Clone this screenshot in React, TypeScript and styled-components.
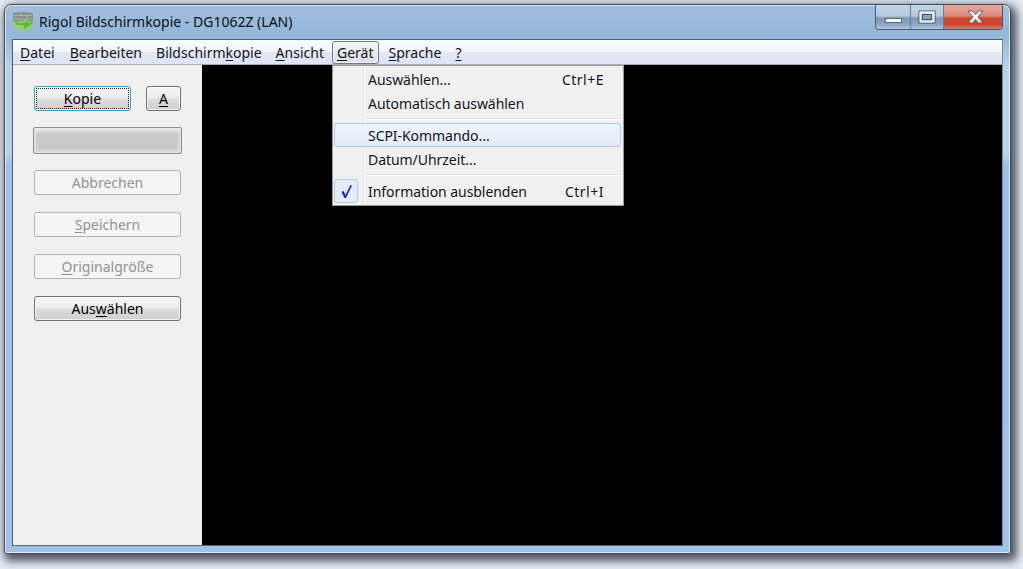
import styled, { createGlobalStyle } from "styled-components";

const Global = createGlobalStyle`
  html, body { margin: 0; padding: 0; height: 100%; background: #e4ebf3; overflow: hidden; }
  body { font-family: "Noto Sans", "Open Sans", sans-serif; font-size: 14px; color: #000; }
  #root { height: 100%; }
`;

const Desktop = styled.div`
  width: 1023px;
  height: 569px;
  box-sizing: border-box;
  padding: 4px 12px 15px 4px;
`;

const Window = styled.div`
  height: 100%;
  box-sizing: border-box;
  display: flex;
  flex-direction: column;
  padding: 0 7px 7px 7px;
  border: 1px solid #3d4a58;
  border-radius: 7px 7px 3px 3px;
  background: linear-gradient(180deg, #a3bfdc 0, #94b6da 30px, #b8d0e8 60px, #b9d1e9 150px, #9dc0e8 160px, #9fc2ea 100%);
  box-shadow: inset 0 0 0 1px rgba(255,255,255,0.7), 3px 4px 9px 3px rgba(30,35,50,0.75);
  position: relative;
`;

const TitleBar = styled.div`
  height: 34px;
  flex: none;
  display: flex;
  align-items: center;
  gap: 6px;
  padding: 0 0 2px 1px;
  box-sizing: border-box;
  font-size: 14px;
  color: #0a0f14;
  white-space: nowrap;
`;

const Caption = styled.div`
  position: absolute;
  top: 0;
  right: 7px;
  display: flex;
  height: 24px;
  border: 1px solid #4a5a6c;
  border-top: none;
  border-radius: 0 0 4px 4px;
  overflow: hidden;
`;

const CaptionButton = styled.div<{ $close?: boolean; $w: number }>`
  width: ${(p) => p.$w}px;
  box-sizing: content-box;
  display: flex;
  align-items: center;
  justify-content: center;
  border-left: 1px solid #6c7f94;
  background: ${(p) =>
    p.$close
      ? "linear-gradient(180deg, #e6a79d 0, #dc8a7e 45%, #c64a2f 55%, #c9452a 80%, #d8806c 100%)"
      : "linear-gradient(180deg, #c4d5e6 0, #b3c8dc 45%, #7f99b4 55%, #8aa5c0 80%, #b0c8e0 100%)"};
  &:first-child { border-left: none; }
  svg { margin-left: ${(p) => (p.$close ? 4 : 0)}px; }
`;

const Client = styled.div`
  flex: 1;
  min-height: 0;
  display: flex;
  flex-direction: column;
  background: #f0f0f0;
  border: 1px solid #4c5866;
  border-bottom-color: #5a6672;
  border-right-color: #7d8a98;
`;

const MenuBar = styled.div`
  height: 25px;
  flex: none;
  box-sizing: border-box;
  display: flex;
  align-items: flex-start;
  padding-top: 1px;
  border-bottom: 1px solid #a8aebc;
  background: linear-gradient(180deg, #fbfcfe 0, #f2f5fa 48%, #e3e7f4 52%, #dfe4f2 100%);
`;

const MenuItem = styled.div<{ $open?: boolean }>`
  height: 23px;
  box-sizing: border-box;
  padding: 0 7px;
  line-height: 23px;
  white-space: nowrap;
  color: #10141c;
  &:first-child { padding-right: 8px; }
  ${(p) =>
    p.$open &&
    `border: 1px solid #6f7a86;
     border-radius: 3px;
     line-height: 21px;
     margin: 0 2px 0 1px;
     padding: 0 5px 0 4px;
     background: linear-gradient(180deg, #f4f5f8, #dcdfe8);
     box-shadow: inset 0 0 0 1px rgba(255,255,255,0.6);`}
`;

const Body = styled.div`
  flex: 1;
  min-height: 0;
  display: flex;
`;

const SidePanel = styled.div`
  width: 189px;
  flex: none;
  box-sizing: border-box;
  padding: 21px 21px 0 21px;
  display: flex;
  flex-direction: column;
`;

const TopRow = styled.div`
  display: flex;
  justify-content: space-between;
  margin-bottom: 16px;
`;

const Button = styled.div<{ $w?: number; $disabled?: boolean; $focus?: boolean }>`
  width: ${(p) => (p.$w ? `${p.$w}px` : "100%")};
  height: 25px;
  box-sizing: border-box;
  flex: none;
  display: flex;
  align-items: center;
  justify-content: center;
  border-radius: 3px;
  border: 1px solid ${(p) => (p.$disabled ? "#adb2b5" : p.$focus ? "#3c9dc8" : "#707070")};
  color: ${(p) => (p.$disabled ? "#8f9496" : "#000")};
  background: ${(p) =>
    p.$disabled ? "#f4f4f4" : "linear-gradient(180deg, #f4f4f4 0, #ececec 48%, #dcdcdc 52%, #cfcfcf 100%)"};
  box-shadow: inset 0 0 0 1px ${(p) => (p.$disabled ? "#f8f8f8" : "rgba(255,255,255,0.75)")};
  ${(p) => p.$focus && "outline: 1px dotted #222; outline-offset: -3px;"}
`;

const Progress = styled.div`
  height: 27px;
  box-sizing: border-box;
  margin: 0 -1px 16px -1px;
  border: 1px solid #8e8e8e;
  border-radius: 2px;
  background: linear-gradient(180deg, #f0f0f0 0, #c9c9c9 6px, #c8c8c8 20px, #e4e4e4 100%);
  box-shadow: inset 3px 0 3px -1px #e2e2e2, inset -3px 0 3px -1px #e2e2e2;
`;

const Stack = styled.div`
  display: flex;
  flex-direction: column;
  gap: 17px;
`;

const Screen = styled.div`
  flex: 1;
  background: #000;
`;

const Key = styled.span`
  text-decoration: underline;
  text-underline-offset: 2px;
  text-decoration-thickness: 1px;
`;

const Dropdown = styled.div`
  position: absolute;
  left: 327px;
  top: 60px;
  width: 292px;
  height: 141px;
  box-sizing: border-box;
  padding: 1px 2px 1px 1px;
  display: flex;
  flex-direction: column;
  background: #f0f0f0;
  border: 1px solid #979797;
  z-index: 2;
  &::before {
    content: "";
    position: absolute;
    left: 30px;
    top: 1px;
    bottom: 1px;
    width: 2px;
    background: linear-gradient(90deg, #e2e3e3 50%, #fff 50%);
  }
`;

const Entry = styled.div<{ $active?: boolean }>`
  position: relative;
  height: 24px;
  flex: none;
  box-sizing: border-box;
  display: flex;
  align-items: center;
  justify-content: space-between;
  padding: 1px 17px 0 34px;
  white-space: nowrap;
  color: #10141c;
  letter-spacing: -0.05px;
  border-radius: 3px;
  ${(p) =>
    p.$active &&
    `border: 1px solid #aeccee;
     padding: 0 16px 0 33px;
     background: linear-gradient(180deg, #f0f4fa, #e3ebf6);`}
`;

const Shortcut = styled.span`
  letter-spacing: 0.5px;
`;

const Separator = styled.div`
  height: 2px;
  flex: none;
  margin: 3px 0 3px 30px;
  background: linear-gradient(180deg, #e0e0e0 50%, #fff 50%);
`;

const CheckBox = styled.div`
  position: absolute;
  left: 0;
  top: 0;
  width: 24px;
  height: 24px;
  box-sizing: border-box;
  display: flex;
  align-items: center;
  justify-content: center;
  border: 1px solid #aeccee;
  border-radius: 3px;
  background: #e4ecf8;
`;

const Underlined = ({ before = "", k, after = "" }: { before?: string; k: string; after?: string }) => (
  <span>
    {before}
    <Key>{k}</Key>
    {after}
  </span>
);

const AppIcon = () => (
  <svg width="20" height="20" viewBox="0 0 20 20" style={{ flex: "none" }}>
    <path d="M0 2 Q10 0 20 2 L20 11 L0 11 Z" fill="#8d8f8c" />
    <path d="M1 4.5 H19 M1 8 H19 M8 2 V4.5 M14 4.5 V8" stroke="#b0b2ae" strokeWidth="1" fill="none" />
    <path d="M0 10 Q1 19 7 19.5 H14 Q20 18 20 10 Z" fill="#8fcf6e" />
    <path d="M2 10 H11 V6 L20 12 L11 18 V14 H6 Q2 14 2 10 Z" fill="#5fb83e" />
    <path d="M4 11 H12 V8 L17 12" stroke="#a6e07f" strokeWidth="1" fill="none" />
  </svg>
);

const App = () => (
  <Desktop>
    <Global />
    <Window>
      <TitleBar>
        <AppIcon />
        Rigol Bildschirmkopie - DG1062Z (LAN)
      </TitleBar>
      <Caption>
        <CaptionButton $w={34}>
          <svg width="17" height="14" viewBox="0 0 17 14">
            <rect x="0.5" y="8.5" width="16" height="4" fill="#fff" stroke="#5a6a7c" />
          </svg>
        </CaptionButton>
        <CaptionButton $w={32}>
          <svg width="18" height="14" viewBox="0 0 18 14">
            <rect x="1" y="1" width="16" height="12" fill="none" stroke="#48586a" strokeWidth="1" />
            <rect x="2.5" y="2.5" width="13" height="9" fill="none" stroke="#f4f4f4" strokeWidth="2" />
            <rect x="4.5" y="4.5" width="9" height="5" fill="#8aa2ba" stroke="#48586a" />
          </svg>
        </CaptionButton>
        <CaptionButton $w={58} $close>
          <svg width="17" height="14" viewBox="0 0 17 14">
            <path
              d="M1 1 H5.5 L8.5 4.5 L11.5 1 H16 L11 7 L16 13 H11.5 L8.5 9.5 L5.5 13 H1 L6 7 Z"
              fill="#f2f2f2"
              stroke="#5e5e6a"
              strokeWidth="1"
            />
          </svg>
        </CaptionButton>
      </Caption>
      <Client>
        <MenuBar>
          <MenuItem><Underlined k="D" after="atei" /></MenuItem>
          <MenuItem><Underlined k="B" after="earbeiten" /></MenuItem>
          <MenuItem><Underlined before="Bildschirm" k="k" after="opie" /></MenuItem>
          <MenuItem><Underlined k="A" after="nsicht" /></MenuItem>
          <MenuItem $open><Underlined k="G" after="erät" /></MenuItem>
          <MenuItem><Underlined k="S" after="prache" /></MenuItem>
          <MenuItem><Underlined k="?" /></MenuItem>
        </MenuBar>
        <Body>
          <SidePanel>
            <TopRow>
              <Button $w={97} $focus><Underlined k="K" after="opie" /></Button>
              <Button $w={35}><Underlined k="A" /></Button>
            </TopRow>
            <Progress />
            <Stack>
              <Button $disabled>Abbrechen</Button>
              <Button $disabled><Underlined k="S" after="peichern" /></Button>
              <Button $disabled><Underlined k="O" after="riginalgröße" /></Button>
              <Button><Underlined before="Aus" k="w" after="ählen" /></Button>
            </Stack>
          </SidePanel>
          <Screen />
        </Body>
      </Client>
      <Dropdown>
        <Entry><span>Auswählen...</span><Shortcut>Ctrl+E</Shortcut></Entry>
        <Entry>Automatisch auswählen</Entry>
        <Separator />
        <Entry $active>SCPI-Kommando...</Entry>
        <Entry>Datum/Uhrzeit...</Entry>
        <Separator />
        <Entry>
          <CheckBox>
            <svg width="13" height="15" viewBox="0 0 13 15">
              <path d="M1.5 8 L3.5 7 L5.5 11 L10.5 1 L12 1.5 L6 14 H4.5 Z" fill="#1c2a9c" />
            </svg>
          </CheckBox>
          <span>Information ausblenden</span><Shortcut>Ctrl+I</Shortcut>
        </Entry>
      </Dropdown>
    </Window>
  </Desktop>
);

export default App;
